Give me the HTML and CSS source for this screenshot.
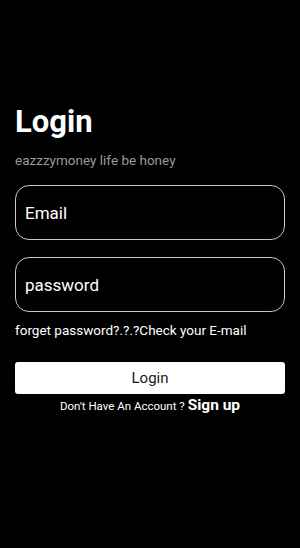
FILE: index.html
```html
<html>

<head>
    <link rel="stylesheet" href="styles.css">
</head>

<body>
    <div class="page">
        <h1 class="title">Login</h1>
        <p class="subtitle">eazzzymoney life be honey</p>
        <div class="field">
            <input class="input" placeholder="Email">
        </div>
        <div class="field">
            <input class="input" type="password" placeholder="password">
        </div>
        <p class="forget">forget password?.?.?Check your E-mail</p>
        <button class="btn">Login</button>
        <p class="signup">Don't Have An Account ? <span class="signup-link">Sign up</span></p>
    </div>
</body>

</html>
```

FILE: styles.css
```css
* {
    margin: 0;
    padding: 0;
    box-sizing: border-box;
    font-family: Roboto, "Liberation Sans", sans-serif;
}

body {
    background-color: #000000;
    color: white;
    width: 300px;
    height: 548px;
}

.page {
    padding: 104px 15px 0 15px;
    display: flex;
    flex-direction: column;
}

.title {
    font-size: 31px;
    font-weight: bold;
    line-height: 36px;
}

.subtitle {
    margin-top: 12px;
    font-size: 13.5px;
    line-height: 16px;
    color: #9a9a9a;
}

.field {
    margin-top: 17px;
    height: 55px;
    border: 1px solid #c8c8c8;
    border-radius: 14px;
    display: flex;
    align-items: center;
}

.field + .field {
    margin-top: 17px;
}

.input {
    background: none;
    border: none;
    outline: none;
    width: 100%;
    padding: 0 9px;
    font-size: 17px;
    color: white;
}

.input::placeholder {
    color: white;
}

.forget {
    margin-top: 9px;
    font-size: 13.5px;
    line-height: 18px;
}

.btn {
    margin-top: 23px;
    height: 32px;
    background-color: white;
    border: none;
    border-radius: 3px;
    font-size: 15px;
    color: #1a1a1a;
}

.signup {
    margin-top: 2px;
    text-align: center;
    font-size: 11.5px;
    line-height: 18px;
}

.signup-link {
    font-size: 15.5px;
    font-weight: bold;
}
```
